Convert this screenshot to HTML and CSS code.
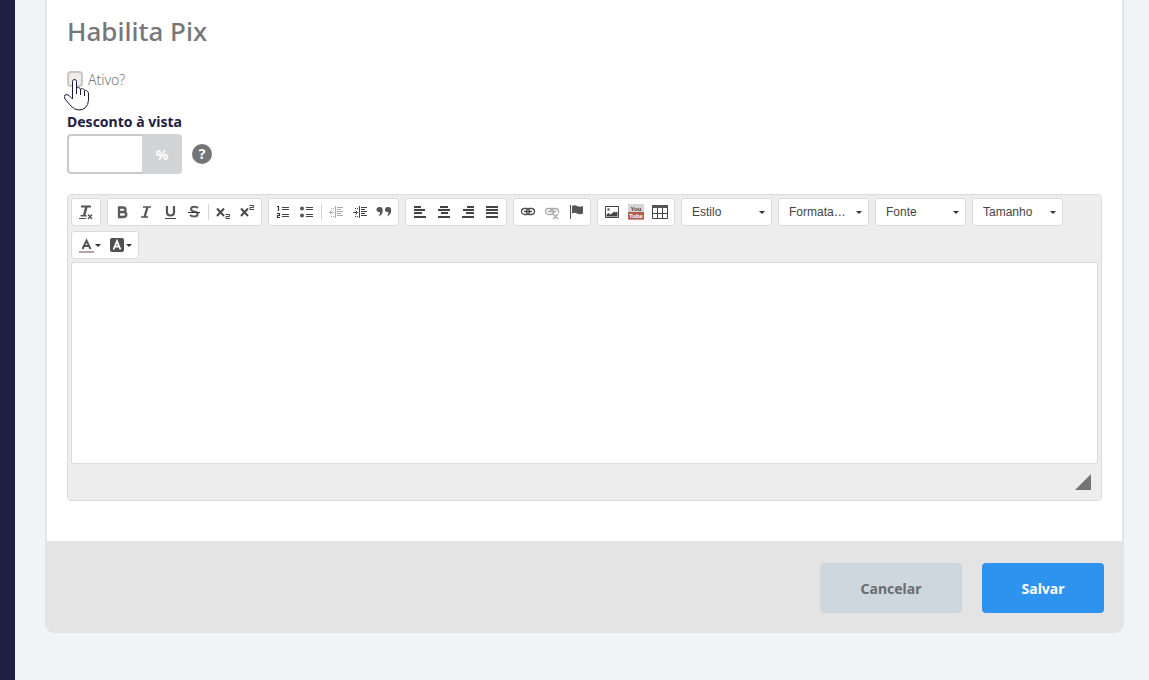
FILE: index.html
```html
<!DOCTYPE html>
<html lang="pt-BR">
<head>
<meta charset="utf-8">
<title>Habilita Pix</title>
<link rel="stylesheet" href="styles.css">
</head>
<body>
<aside class="sidebar"></aside>
<main class="page">
  <form class="card">
    <div class="card-body">
      <h1 class="title">Habilita Pix</h1>
      <div class="active-row">
        <input class="check" type="checkbox" id="active">
        <label class="check-label" for="active">Ativo?</label>
        <svg class="pointer" width="26" height="33" viewBox="0 0 26 33" aria-hidden="true"><path d="M8.500 21V3.500Q8.500 1.500 10.500 1.500T12.500 3.500V12V10.500Q13 9.500 14.500 9.500T16.500 11.500V13V11.500Q17 10.500 18.500 10.700T20.500 12.500V14.500V13Q21.500 12 22.500 12.500T24.500 15V22Q24.500 27 21 30Q18.500 32 15 32Q10.500 32 7 28L1 21Q-.5 18 1 17Q3 16 5 17.500L8.500 21M12.500 11V16M16.500 12V17M20.500 13V18" fill="#fff" stroke="#1c1b38"/></svg>
      </div>
      <label class="field-label" for="discount">Desconto à vista</label>
      <div class="discount">
        <div class="input-group">
          <input class="amount" type="text" id="discount">
          <span class="suffix">%</span>
        </div>
        <button class="help" type="button" aria-label="Ajuda">?</button>
      </div>

      <section class="editor" aria-label="Editor de texto">
        <div class="toolbar">
          <div class="group">
            <button class="tool" type="button" aria-label="Remover formatação"><svg viewBox="0 0 16 16"><path d="M3 1.500h10v2H9.500l-2 7.500H9v1.500H2.500V11H5l2-7.500H3z" fill="#555"/><path d="M1 14.500h7" stroke="#505050"/><path d="M9 10l5 5m0-5l-5 5" stroke="#fff" stroke-width="3"/><path d="M10 10.500l4 4.500m0-4.500l-4 4.500" stroke="#505050" stroke-width="1.300"/></svg></button>
          </div>
          <div class="group">
            <button class="tool" type="button" aria-label="Negrito"><svg viewBox="0 0 16 16"><path d="M5 3.500h4q2.500 0 2.500 2.200T9 8q3.300 0 3.300 2.500T9 13H5zM5 8h4" fill="none" stroke="#5a5a5a" stroke-width="2.300"/></svg></button>
            <button class="tool" type="button" aria-label="Itálico"><svg viewBox="0 0 16 16"><path d="M5 3h8M3 13h7" stroke="#555" stroke-width="1.500"/><path d="M9.500 3l-3 10" stroke="#555" stroke-width="2.300"/></svg></button>
            <button class="tool" type="button" aria-label="Sublinhado"><svg viewBox="0 0 16 16"><path d="M5 2v6.500q0 3 3.500 3t3.500-3V2" fill="none" stroke="#555" stroke-width="2.200"/><path d="M3 14.500h11" stroke="#444"/></svg></button>
            <button class="tool" type="button" aria-label="Tachado"><svg viewBox="0 0 16 16"><path d="M12 4Q11 2.700 8.500 2.700C4 2.700 4 7 8 7.500C13 8 12.500 12.500 8 12.500Q5.500 12.500 4 11" fill="none" stroke="#5a5a5a" stroke-width="2.100"/><path d="M2 8.500h12" stroke="#333"/></svg></button>
            <span class="separator"></span>
            <button class="tool" type="button" aria-label="Subscrito"><svg viewBox="0 0 16 16"><path d="M2 4.500l7 7.500m0-7.500l-7 7.500" stroke="#4b4b4b" stroke-width="2"/><path d="M10.500 10.500h4v2h-3.500v2h4" fill="none" stroke="#444"/></svg></button>
            <button class="tool" type="button" aria-label="Sobrescrito"><svg viewBox="0 0 16 16"><path d="M2 4.500l7 7.500m0-7.500l-7 7.500" stroke="#4b4b4b" stroke-width="2"/><path d="M10.500 1.500h4v2h-3.500v2h4" fill="none" stroke="#444"/></svg></button>
          </div>
          <div class="group">
            <button class="tool" type="button" aria-label="Lista numerada"><svg viewBox="0 0 16 16"><path d="M7 3.500h7M7 5.500h7M7 10.500h7M7 12.500h7" stroke="#444"/><path d="M2 2.500h1.500V7M2 9.500h2.500v2h-2v2H5" fill="none" stroke="#333" stroke-width="1.200"/></svg></button>
            <button class="tool" type="button" aria-label="Lista com marcadores"><svg viewBox="0 0 16 16"><circle cx="3" cy="4.500" r="2" fill="#555"/><circle cx="3" cy="11.500" r="2" fill="#555"/><path d="M7 3.500h7M7 5.500h7M7 10.500h7M7 12.500h7" stroke="#444"/></svg></button>
            <span class="separator"></span>
            <button class="tool" type="button" disabled aria-label="Diminuir recuo"><svg viewBox="0 0 16 16"><path d="M7.500 2v12M1 8.500h5M3.500 6.500L1.500 8.500 3.500 10.500M9 3.500h6M9 5.500h4M9 7.500h6M9 9.500h4M9 11.500h6M3 4.500h1M5 4.500h1M3 12.500h1M5 12.500h1" fill="none" stroke="#aaa"/></svg></button>
            <button class="tool" type="button" aria-label="Aumentar recuo"><svg viewBox="0 0 16 16"><path d="M7.500 2v12M1 8.500h5M3.500 6.500L5.500 8.500 3.500 10.500M9 3.500h6M9 5.500h4M9 7.500h6M9 9.500h4M9 11.500h6M3 4.500h1M5 4.500h1M3 12.500h1M5 12.500h1" fill="none" stroke="#444"/></svg></button>
            <button class="tool" type="button" aria-label="Citação"><svg viewBox="0 0 16 16"><path id="quote" d="M4 3C1 3 0 5 .7 6.700Q1.500 8.500 4 8Q4 11 2 12.500Q7 11 6.700 6Q6.500 3 4 3z" fill="#555"/><use href="#quote" x="8.500"/></svg></button>
          </div>
          <div class="group">
            <button class="tool" type="button" aria-label="Alinhar à esquerda"><svg viewBox="0 0 16 16"><path d="M2 3h7M2 6h11M2 9h8M2 13h12" stroke="#444" stroke-width="2"/></svg></button>
            <button class="tool" type="button" aria-label="Centralizar"><svg viewBox="0 0 16 16"><path d="M4 3h8M2 6h12M5 9h7M2 13h12" stroke="#444" stroke-width="2"/></svg></button>
            <button class="tool" type="button" aria-label="Alinhar à direita"><svg viewBox="0 0 16 16"><path d="M7 3h7M3 6h11M6 9h8M2 13h12" stroke="#444" stroke-width="2"/></svg></button>
            <button class="tool" type="button" aria-label="Justificar"><svg viewBox="0 0 16 16"><path d="M2 3h12M2 6h12M2 9h12M2 13h12" stroke="#444" stroke-width="2"/></svg></button>
          </div>
          <div class="group">
            <button class="tool" type="button" aria-label="Inserir link"><svg viewBox="0 0 16 16"><rect x="1.500" y="4.500" width="8" height="6" rx="3" fill="none" stroke="#555" stroke-width="1.300"/><rect x="6.500" y="4.500" width="8" height="6" rx="3" fill="none" stroke="#555" stroke-width="1.300"/><path d="M4 7.500h8" stroke="#444" stroke-width="1.300"/></svg></button>
            <button class="tool" type="button" disabled aria-label="Remover link"><svg viewBox="0 0 16 16"><rect x="1.500" y="4.500" width="8" height="6" rx="3" fill="none" stroke="#aaa" stroke-width="1.300"/><path d="M6.500 7.500q0-3 3-3h2q3 0 3 3v1.500M4 7.500h8M9 10l5 5m0-5l-5 5" fill="none" stroke="#aaa" stroke-width="1.300"/></svg></button>
            <button class="tool" type="button" aria-label="Inserir âncora"><svg viewBox="0 0 16 16"><path d="M2.500 1v14" stroke="#555"/><path d="M4 2Q6 .5 9 2T15 2V9.500Q12 11 9 9.500T4 9.500z" fill="#555"/></svg></button>
          </div>
          <div class="group">
            <button class="tool" type="button" aria-label="Inserir imagem"><svg viewBox="0 0 16 16"><path d="M1.500 2.500h13v11h-13z" fill="#fff" stroke="#444"/><circle cx="4.500" cy="5.500" r="1.200" fill="#555"/><path d="M2.500 12.500v-2l2-1.500 2 1.500 4-3 1 1 2-1v5z" fill="#444"/></svg></button>
            <button class="tool" type="button" aria-label="Inserir vídeo do YouTube"><svg viewBox="0 0 16 16"><rect width="16" height="16" rx="1" fill="#d5d5d5"/><path d="M0 8h16v7.500H0z" fill="#b75b4b"/><text class="tube" x="8" y="6.500" fill="#444">You</text><text class="tube" x="8" y="14" fill="#fff">Tube</text></svg></button>
            <button class="tool" type="button" aria-label="Inserir tabela"><svg viewBox="0 0 16 16"><path d="M.5 1.500h15v13H.5zM.5 9.500h15M5.500 4v10.500M10.500 4v10.500" fill="#fff" stroke="#444"/><path d="M0 1h16v3H0z" fill="#555"/></svg></button>
          </div>
          <div class="combo"><select aria-label="Estilo"><option>Estilo</option></select><i class="caret"></i></div>
          <div class="combo"><select aria-label="Formatação"><option>Formata…</option></select><i class="caret"></i></div>
          <div class="combo"><select aria-label="Fonte"><option>Fonte</option></select><i class="caret"></i></div>
          <div class="combo"><select aria-label="Tamanho"><option>Tamanho</option></select><i class="caret"></i></div>
          <div class="group">
            <button class="tool tool-menu" type="button" aria-label="Cor do texto"><svg viewBox="0 0 16 16"><path d="M4.500 12L8.500 3.500 12.500 12M6 9h5" fill="none" stroke="#555" stroke-width="2"/><path d="M1 15h15" stroke="#b5a8a4" stroke-width="2"/></svg><i class="caret"></i></button>
            <button class="tool tool-menu" type="button" aria-label="Cor de fundo"><svg viewBox="0 0 16 16"><rect x="1" y="1" width="14" height="14" rx="2" fill="#505050"/><path d="M4.500 12.500L8 4l3.500 8.500M5.500 9.500h5" fill="none" stroke="#fff" stroke-width="1.800"/></svg><i class="caret"></i></button>
          </div>
        </div>
        <textarea class="content" aria-label="Conteúdo"></textarea>
        <div class="editor-foot"><svg width="16" height="16" viewBox="0 0 16 16" aria-hidden="true"><path d="M16 0v16H0z" fill="#747577"/></svg></div>
      </section>
    </div>
    <footer class="actions">
      <button class="btn btn-cancel" type="button">Cancelar</button>
      <button class="btn btn-save" type="submit">Salvar</button>
    </footer>
  </form>
</main>
</body>
</html>
```
FILE: styles.css
```css
* { box-sizing: border-box; }

body {
  margin: 0;
  min-height: 100vh;
  display: flex;
  background: #f1f3f5;
  color: #77777a;
  font-family: "Noto Sans", "Open Sans", sans-serif;
  font-size: 14px;
}

button, input, select, textarea { font: inherit; margin: 0; }

.sidebar { flex: 0 0 15px; background: #1f2044; }

.page { flex: 1; min-width: 0; padding: 0 25px 47px 30px; }

.card {
  border: 2px solid #e4e4e5;
  border-top: 0;
  border-radius: 0 0 9px 9px;
  background: #e4e4e4;
}

.card-body { padding: 11px 20px 40px; background: #fff; }

.title {
  margin: 0;
  font-size: 26px;
  line-height: 40px;
  font-weight: 500;
}

.active-row {
  position: relative;
  display: flex;
  align-items: center;
  gap: 5px;
  height: 20px;
  margin-top: 18px;
}

.check {
  appearance: none;
  width: 16px;
  height: 16px;
  border: 2px solid #c8c8c8;
  border-radius: 4px;
  background: #efebe9;
}

.check-label { font-size: 14px; font-weight: 300; }

.pointer { position: absolute; left: -3px; top: 9px; }

.field-label {
  display: block;
  margin-top: 23px;
  line-height: 20px;
  font-size: 14px;
  font-weight: 700;
  color: #1f2044;
}

.discount { display: flex; align-items: center; gap: 10px; margin-top: 2px; }

.input-group { display: flex; width: 115px; height: 40px; }

.amount {
  flex: 1;
  min-width: 0;
  padding: 0 10px;
  border: 2px solid #c9cacb;
  border-right: 0;
  border-radius: 4px 0 0 4px;
  background: #fff;
}

.suffix {
  display: grid;
  place-items: center;
  width: 40px;
  border-radius: 0 4px 4px 0;
  background: #d1d3d5;
  color: #fff;
  font-size: 14px;
  font-weight: 700;
}

.help {
  width: 20px;
  height: 20px;
  padding: 0;
  border: 0;
  border-radius: 50%;
  background: #747577;
  color: #fff;
  font-size: 14px;
  font-weight: 700;
  line-height: 20px;
}

.editor {
  margin-top: 20px;
  padding: 3px;
  border: 1px solid #dcdcdc;
  border-radius: 4px;
  background: #ededed;
}

.toolbar { display: flex; flex-wrap: wrap; gap: 5px 6px; }

.group {
  display: flex;
  align-items: center;
  height: 28px;
  padding: 0 2px;
  border: 1px solid #dcdcdc;
  border-radius: 3px;
  background: #fff;
}

.tool {
  display: flex;
  align-items: center;
  padding: 4px;
  border: 0;
  background: none;
}

.tool svg { flex: none; width: 16px; height: 16px; }

.tool-menu { gap: 1px; width: 31px; }

.tube {
  font-family: "Liberation Sans", Arial, sans-serif;
  font-size: 6px;
  font-weight: 700;
  text-anchor: middle;
}

.separator { width: 1px; height: 16px; margin: 0 2px; background: #d5d5d5; }

.caret {
  flex: none;
  border: 3px solid transparent;
  border-top-color: #333;
  border-bottom: 0;
}

.combo {
  display: grid;
  align-items: center;
  width: 91px;
  height: 28px;
  border: 1px solid #dcdcdc;
  border-radius: 3px;
  background: #fff;
}

.combo select {
  grid-area: 1 / 1;
  appearance: none;
  width: 100%;
  height: 26px;
  padding: 0 16px 0 10px;
  border: 0;
  background: none;
  color: #444;
  font-family: "Liberation Sans", Arial, sans-serif;
  font-size: 12px;
}

.combo .caret {
  grid-area: 1 / 1;
  justify-self: end;
  margin-right: 6px;
  pointer-events: none;
}

.content {
  display: block;
  width: 100%;
  height: 202px;
  margin-top: 3px;
  padding: 12px;
  border: 1px solid #dcdcdc;
  border-radius: 3px;
  background: #fff;
  resize: none;
}

.editor-foot {
  display: flex;
  justify-content: flex-end;
  padding: 10px 7px 7px;
}

.actions {
  display: flex;
  justify-content: flex-end;
  gap: 20px;
  padding: 22px 18px 18px;
}

.btn {
  height: 50px;
  padding: 0 20px;
  border: 0;
  border-radius: 4px;
  font-size: 14px;
  font-weight: 700;
}

.btn-cancel { min-width: 142px; background: #cdd7dd; color: #6c6c70; }

.btn-save { min-width: 122px; background: #2e93ef; color: #fff; }
```
